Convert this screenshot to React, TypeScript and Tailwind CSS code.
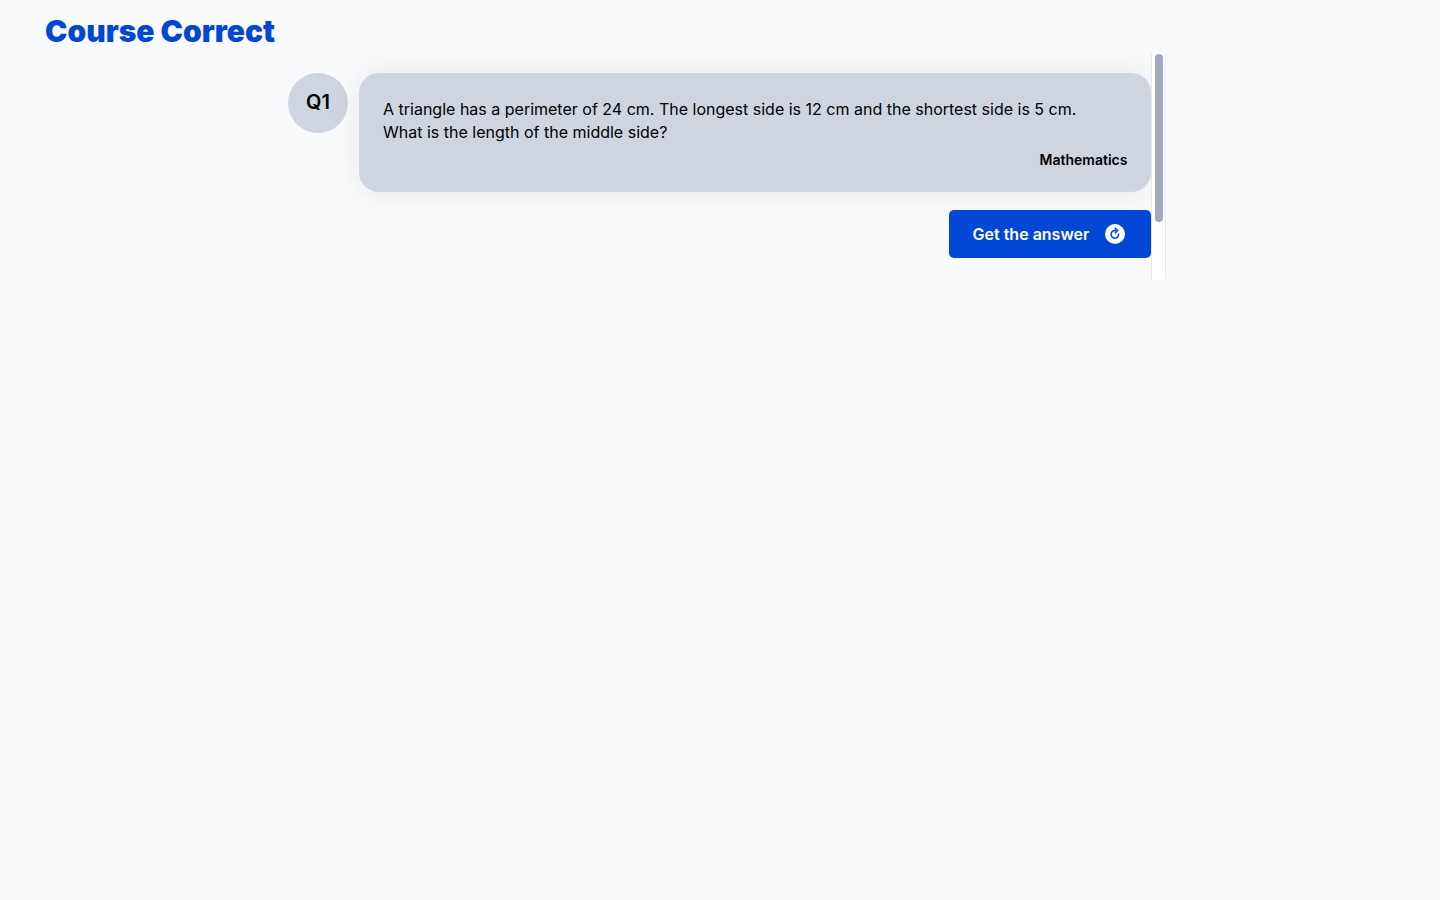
function ReloadBadge() {
  return (
    <svg width="20" height="20" viewBox="0 0 20 20" fill="none" aria-hidden="true" className="shrink-0">
      <circle cx="10" cy="10" r="10" fill="#fff" />
      <path d="M11 6.7A3.8 3.8 0 1 0 13.6 9.6" stroke="#0047d6" strokeWidth="1.5" />
      <path d="M9.8 3.9L12.6 6.6L9.8 9.2" stroke="#0047d6" strokeWidth="1.5" />
    </svg>
  );
}

function Question() {
  return (
    <article className="flex items-start gap-[11px]">
      <div className="flex size-[60px] shrink-0 items-center justify-center rounded-full bg-[#ced5df] pb-0.5 text-xl font-semibold">
        Q1
      </div>
      <div className="min-w-0 flex-1 rounded-[20px] bg-[#ced5df] px-6 pt-[25px] pb-6 shadow-[0_0_30px_rgba(0,0,0,0.08)]">
        <p className="text-base leading-[23px]">
          A triangle has a perimeter of 24 cm. The longest side is 12 cm and the shortest side is 5 cm.
          <br />
          What is the length of the middle side?
        </p>
        <p className="mt-2 text-right text-sm leading-4 font-semibold">Mathematics</p>
      </div>
    </article>
  );
}

export default function App() {
  return (
    <div className="min-h-screen bg-[#f8fafc] font-['Inter',sans-serif] text-black">
      <header className="px-[45px] pt-[11px] pb-0.5">
        <h1 className="text-3xl leading-10 font-black text-[#0047d6]">Course Correct</h1>
      </header>
      <main className="ml-[20%] flex w-[61%]">
        <section className="min-w-0 flex-1 overflow-hidden pt-5 pb-[21px]">
          <Question />
          <div className="mt-[18px] flex justify-end">
            <button
              type="button"
              className="flex h-12 items-center gap-4 rounded-[5px] bg-[#0047d6] pr-[26px] pl-6 text-base font-semibold text-white"
            >
              Get the answer
              <ReloadBadge />
            </button>
          </div>
        </section>
        <div className="w-[15px] shrink-0 border-x border-[#e8e8e8] bg-white pt-px pr-0.5 pl-[3px]">
          <div className="h-[168px] rounded-full bg-[#a3aabf]" />
        </div>
      </main>
    </div>
  );
}
